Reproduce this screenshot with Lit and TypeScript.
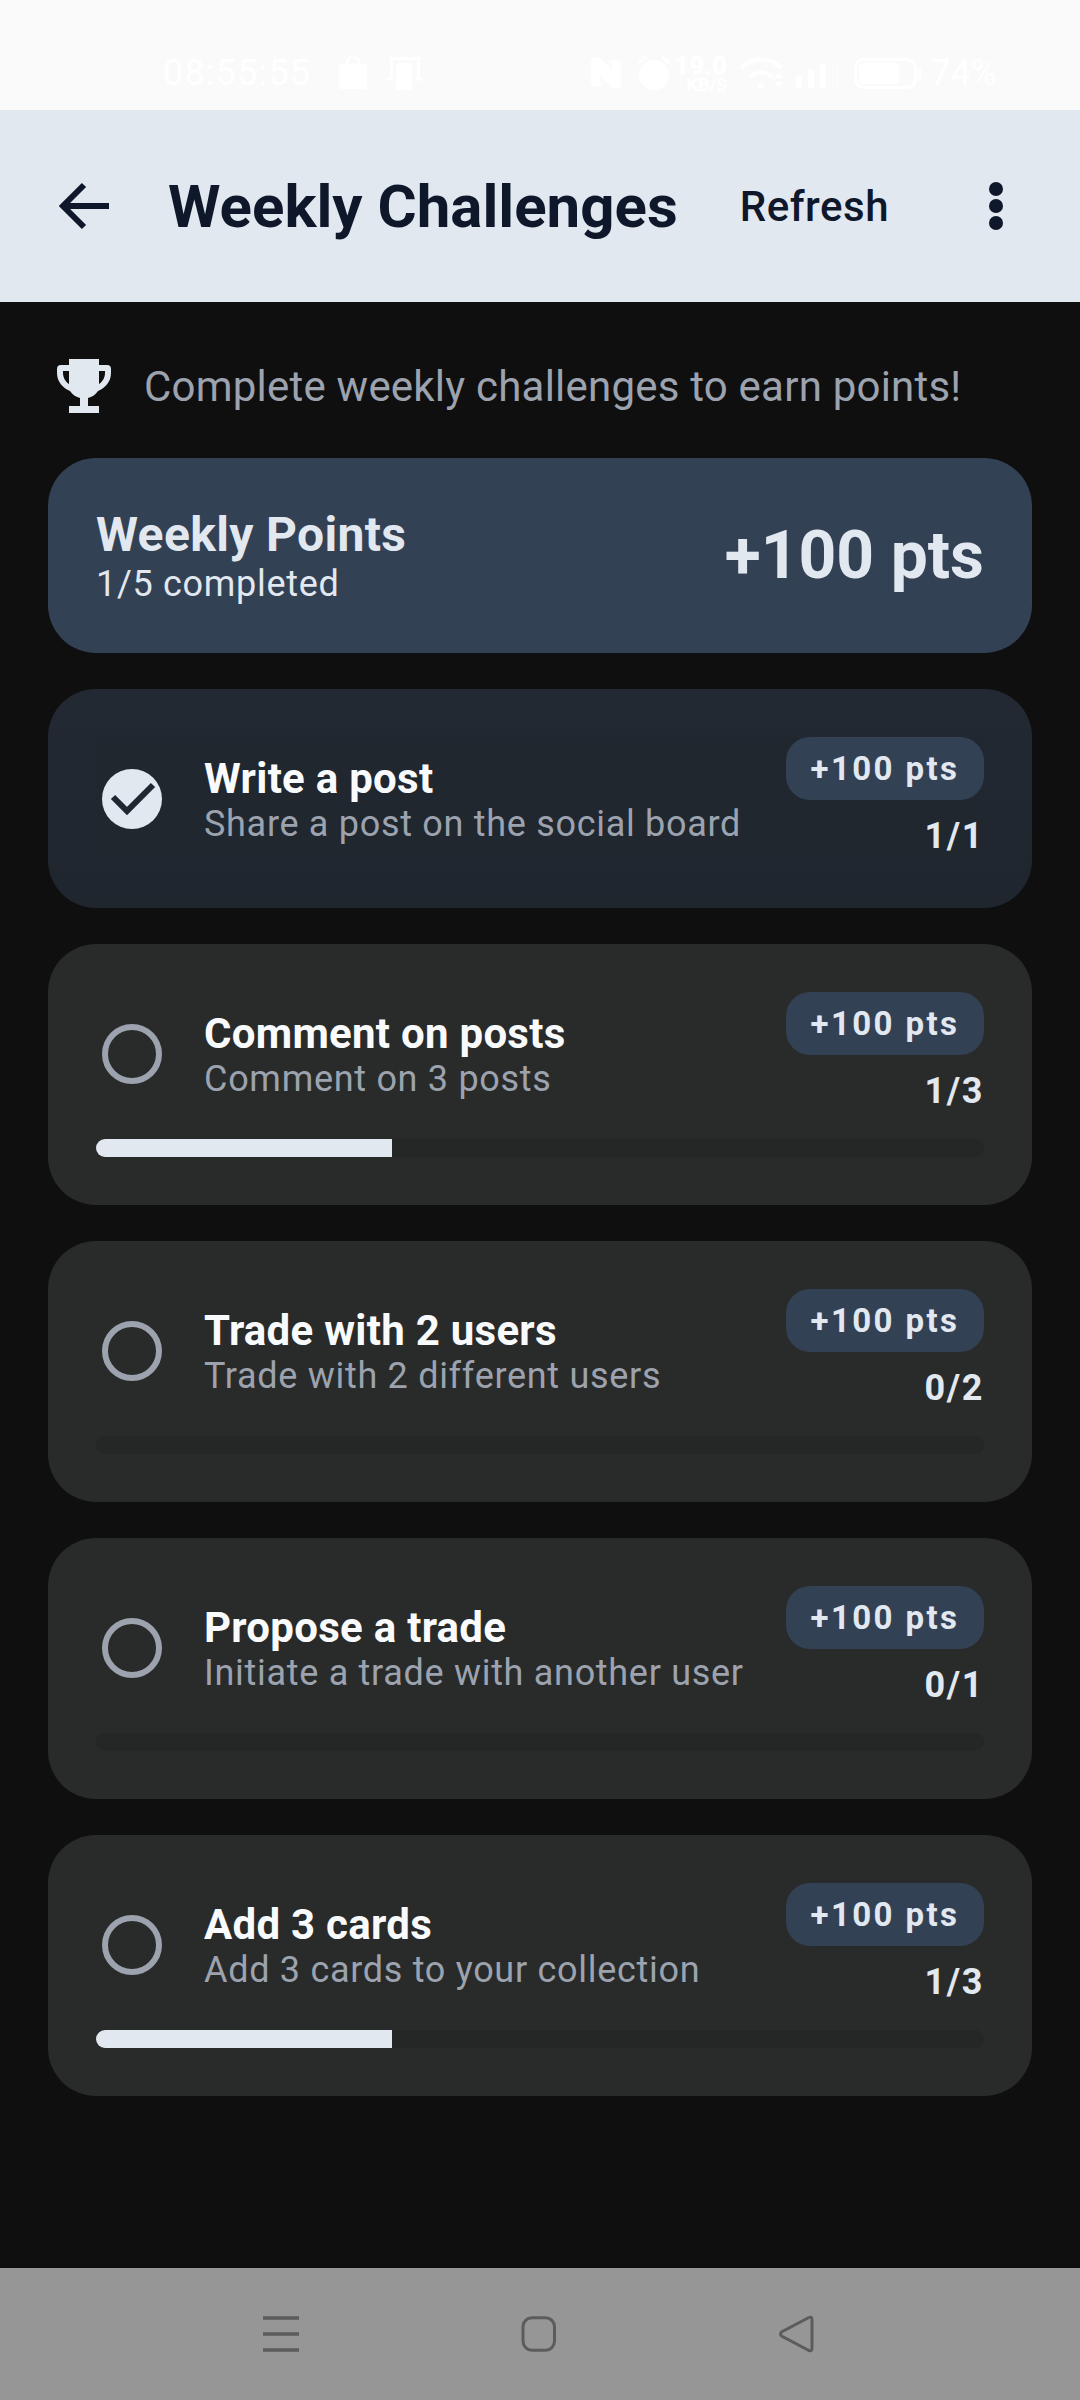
import { LitElement, css, html } from "lit";
import { customElement } from "lit/decorators.js";

interface Challenge {
  title: string;
  desc: string;
  done: number;
  total: number;
}

const challenges: Challenge[] = [
  { title: "Write a post", desc: "Share a post on the social board", done: 1, total: 1 },
  { title: "Comment on posts", desc: "Comment on 3 posts", done: 1, total: 3 },
  { title: "Trade with 2 users", desc: "Trade with 2 different users", done: 0, total: 2 },
  { title: "Propose a trade", desc: "Initiate a trade with another user", done: 0, total: 1 },
  { title: "Add 3 cards", desc: "Add 3 cards to your collection", done: 1, total: 3 },
];

@customElement("app-root")
export class AppRoot extends LitElement {
  static styles = css`
    :host {
      display: block;
      width: 1080px;
      height: 2400px;
      background: #0f0f0f;
      font-family: Roboto, sans-serif;
      overflow: hidden;
    }

    .page {
      display: flex;
      flex-direction: column;
      height: 2400px;
    }

    .status {
      height: 110px;
      background: #fafafa;
      color: #ffffff;
      display: flex;
      align-items: center;
      justify-content: space-between;
      padding: 36px 83px 0 163px;
      box-sizing: border-box;
      font-size: 36px;
    }

    .status-side {
      display: flex;
      align-items: center;
    }

    .status svg {
      display: block;
    }

    .time {
      letter-spacing: 1.2px;
      margin-right: 28px;
    }

    .tablet {
      margin-left: 20px;
    }

    .alarm {
      margin: 0 13px 0 17px;
    }

    .speed {
      width: 44px;
      margin-right: 13px;
      display: flex;
      flex-direction: column;
      align-items: flex-end;
      font-weight: 700;
    }

    .speed b {
      font-size: 26px;
      line-height: 22px;
    }

    .speed small {
      font-size: 18px;
      line-height: 15px;
      white-space: nowrap;
    }

    .signal {
      margin: 0 16px 0 11px;
    }

    .battery {
      margin-right: 8px;
    }

    .appbar {
      height: 192px;
      background: #e2e8f0;
      color: #0f172a;
      display: flex;
      align-items: center;
      padding: 0 77px 0 59px;
    }

    .appbar h1 {
      margin: 0 0 0 59px;
      font-size: 60px;
      font-weight: 700;
      flex: 1;
    }

    .refresh {
      font-size: 42px;
      font-weight: 500;
      letter-spacing: 0.5px;
      margin-right: 100px;
    }

    .content {
      flex: 1;
      padding: 0 48px;
      display: flex;
      flex-direction: column;
    }

    .intro {
      height: 156px;
      box-sizing: border-box;
      padding: 12px 0 0 9px;
      display: flex;
      align-items: center;
      gap: 33px;
      color: #9ca3af;
      font-size: 42px;
      letter-spacing: 0.22px;
    }

    .summary {
      height: 195px;
      background: #334155;
      border-radius: 48px;
      padding: 0 48px;
      display: flex;
      align-items: center;
      justify-content: space-between;
      color: #e2e8f0;
    }

    .summary h2 {
      margin: 0;
      font-size: 48px;
      font-weight: 700;
      line-height: 56px;
      letter-spacing: 0.35px;
    }

    .summary p {
      margin: 0;
      font-size: 36px;
      line-height: 42px;
      letter-spacing: 0.7px;
    }

    .total {
      font-size: 66px;
      font-weight: 700;
    }

    .card {
      margin-top: 36px;
      border-radius: 48px;
      background: #292b2a;
      padding: 48px;
    }

    .card.complete {
      background: linear-gradient(#232933, #1f262e);
    }

    .row {
      display: flex;
      align-items: center;
      height: 123px;
    }

    .complete .row {
      background: #20272f;
    }

    .mark {
      width: 60px;
      height: 60px;
      margin: 0 42px 0 6px;
      flex: none;
      border-radius: 50%;
      border: 6px solid #9ca3af;
      box-sizing: border-box;
    }

    .mark-done {
      width: 60px;
      height: 60px;
      margin: 0 42px 0 6px;
      flex: none;
      display: block;
    }

    .text {
      flex: 1;
      align-self: flex-start;
      padding-top: 18px;
    }

    .text h3 {
      margin: 0;
      font-size: 42px;
      line-height: 48px;
      font-weight: 700;
      letter-spacing: 0.27px;
      color: #f8fafc;
    }

    .text p {
      margin: 0;
      font-size: 36px;
      line-height: 42px;
      letter-spacing: 0.7px;
      color: #9ca3af;
    }

    .side {
      align-self: flex-start;
      display: flex;
      flex-direction: column;
      align-items: flex-end;
    }

    .chip {
      height: 63px;
      width: 198px;
      border-radius: 24px;
      background: #334155;
      color: #e2e8f0;
      font-size: 33px;
      font-weight: 700;
      letter-spacing: 2.4px;
      display: flex;
      align-items: center;
      justify-content: center;
    }

    .count {
      margin-top: 15px;
      font-size: 36px;
      line-height: 42px;
      font-weight: 700;
      letter-spacing: 1.6px;
      color: #e2e8f0;
    }

    .track {
      margin-top: 24px;
      height: 18px;
      background: #252626;
      border-radius: 9px;
      overflow: hidden;
    }

    .fill {
      height: 100%;
      background: #e2e8f0;
    }

    .navbar {
      height: 132px;
      background: #969696;
      display: flex;
      align-items: center;
      padding-left: 263px;
    }

    .navbar svg {
      display: block;
    }
  `;

  private renderStatus() {
    return html`
      <div class="status">
        <div class="status-side">
          <span class="time">08:55:55</span>
          <svg width="28" height="32" viewBox="0 0 28 32" fill="#fff">
            <path d="M2 7h24q2 0 2 2v21q0 2-2 2H2q-2 0-2-2V9q0-2 2-2z" />
            <path d="M8 8V6a6 6 0 0 1 12 0v2" fill="none" stroke="#fff" stroke-width="2.5" />
          </svg>
          <svg class="tablet" width="36" height="33" viewBox="0 0 36 33" fill="#fff">
            <path d="M3 0h30v21h-3V3H6v18H3z" />
            <path d="M0 21h7v2.500H0zM29 21h7v2.500h-7z" />
            <rect x="9" y="6" width="16" height="27" rx="2" />
          </svg>
        </div>
        <div class="status-side">
          <svg width="30" height="30" viewBox="0 0 30 30" fill="#fff">
            <path d="M3 0h6l12 12V5h-3V2h9q3 0 3 3v22q0 3-3 3h-6L9 18v7h3v3H3q-3 0-3-3V3q0-3 3-3z" />
          </svg>
          <svg class="alarm" width="32" height="34" viewBox="0 0 32 34" fill="#fff">
            <circle cx="16" cy="19" r="15" />
            <path d="M1 7l7-6M31 7l-7-6" fill="none" stroke="#fff" stroke-width="3" />
          </svg>
          <div class="speed"><b>19.0</b><small>KB/S</small></div>
          <svg width="45" height="33" viewBox="0 0 45 33" fill="none" stroke="#fff" stroke-width="4">
            <path d="M1 11a28 28 0 0 1 40 0M10 20a16 16 0 0 1 22 0" />
            <circle cx="21" cy="29" r="3" fill="#fff" stroke="none" />
            <path d="M34 21h9l-4.500-5zM34 25h9l-4.500 5z" fill="#fff" stroke="none" />
          </svg>
          <svg class="signal" width="42" height="29" viewBox="0 0 42 29" fill="#fff">
            <rect y="17" width="6" height="12" />
            <rect x="12" y="11" width="6" height="18" />
            <rect x="24" y="5" width="6" height="24" />
            <rect x="36.500" y="0.500" width="5" height="28" fill="none" stroke="#fff" stroke-opacity="0.4" />
          </svg>
          <svg class="battery" width="68" height="31" viewBox="0 0 68 31" fill="none">
            <rect x="1.500" y="1.500" width="60" height="28" rx="8" stroke="#fff" stroke-width="3" />
            <rect x="5" y="5" width="40" height="21" rx="4" fill="#fff" />
            <rect x="64" y="10" width="3" height="11" rx="1.500" fill="#fff" />
          </svg>
          <span>74%</span>
        </div>
      </div>
    `;
  }

  private renderCard(c: Challenge) {
    const complete = c.done >= c.total;
    return html`
      <div class="card ${complete ? "complete" : ""}">
        <div class="row">
          ${complete
            ? html`<svg class="mark-done" viewBox="0 0 60 60">
                <circle cx="30" cy="30" r="30" fill="#e2e8f0" />
                <path d="M11 28l14 14 26-26" fill="none" stroke="#202730" stroke-width="6" />
              </svg>`
            : html`<div class="mark"></div>`}
          <div class="text">
            <h3>${c.title}</h3>
            <p>${c.desc}</p>
          </div>
          <div class="side">
            <div class="chip">+100 pts</div>
            <div class="count">${c.done}/${c.total}</div>
          </div>
        </div>
        ${complete
          ? ""
          : html`<div class="track">
              <div class="fill" style="width:${(c.done / c.total) * 100}%"></div>
            </div>`}
      </div>
    `;
  }

  render() {
    return html`
      <div class="page">
        ${this.renderStatus()}
        <div class="appbar">
          <svg width="50" height="48" viewBox="0 0 50 48" fill="none" stroke="#0f172a" stroke-width="6">
            <path d="M50 24H4M25 3L4 24l21 21" />
          </svg>
          <h1>Weekly Challenges</h1>
          <span class="refresh">Refresh</span>
          <svg width="14" height="48" viewBox="0 0 14 48" fill="#0f172a">
            <circle cx="7" cy="7" r="7" /><circle cx="7" cy="24" r="7" /><circle cx="7" cy="41" r="7" />
          </svg>
        </div>
        <div class="content">
          <div class="intro">
            <svg width="54" height="54" viewBox="0 0 54 54" fill="#e2e8f0">
              <path
                fill-rule="evenodd"
                d="M12 0h30v6h8q4 0 4 4v4c0 9-6 15-13 18-3 4-6 6-10 7v8h11v7H12v-7h11v-8c-4-1-7-3-10-7C6 29 0 23 0 14v-4q0-4 4-4h8zM6 12v2c0 5 3 9 6 11V12zm42 0h-6v13c3-2 6-6 6-11z"
              />
            </svg>
            <span>Complete weekly challenges to earn points!</span>
          </div>
          <div class="summary">
            <div>
              <h2>Weekly Points</h2>
              <p>1/5 completed</p>
            </div>
            <div class="total">+100 pts</div>
          </div>
          ${challenges.map((c) => this.renderCard(c))}
        </div>
        <div class="navbar">
          <svg width="552" height="40" viewBox="0 0 552 40" fill="none" stroke="#5c5c5c" stroke-width="3.5">
            <path d="M0 4h36M0 20h36M0 36h36" />
            <rect x="260" y="3.750" width="31.500" height="32.500" rx="9" stroke-width="3" />
            <path
              stroke-width="3"
              d="M544 4.500L518.500 18q-2 2 0 4L544 35.500q5 3.500 5-2V6.500q0-5.500-5-2z"
            />
          </svg>
        </div>
      </div>
    `;
  }
}
